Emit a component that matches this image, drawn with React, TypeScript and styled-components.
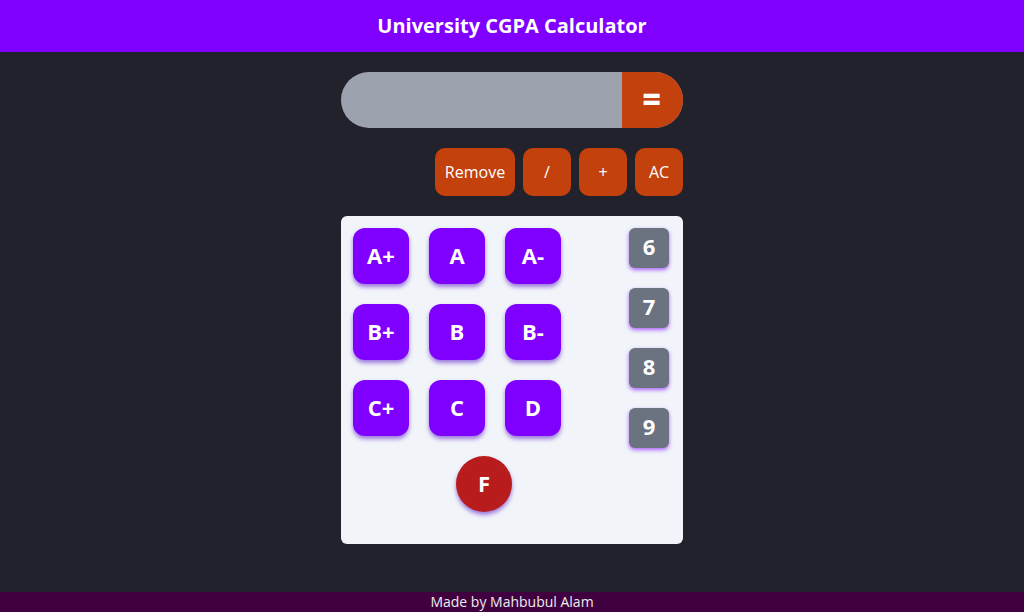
import React from "react";
import styled, { createGlobalStyle } from "styled-components";

const Global = createGlobalStyle`
  html, body { margin: 0; padding: 0; }
  body { background: #21222c; font-family: "Open Sans", "Noto Sans", sans-serif; }
  #root { min-height: 612px; }
`;

const Page = styled.div`
  height: 612px;
  display: flex;
  flex-direction: column;
  background: #21222c;
`;

const Header = styled.header`
  height: 52px;
  background: #8000ff;
  color: #fff;
  display: flex;
  align-items: center;
  justify-content: center;
  font-weight: 700;
  font-size: 20px;
  padding-bottom: 2px;
  box-sizing: border-box;
`;

const Main = styled.main`
  flex: 1;
  display: flex;
  flex-direction: column;
  align-items: center;
  padding-top: 20px;
`;

const Calc = styled.div`
  width: 342px;
  display: flex;
  flex-direction: column;
  gap: 20px;
`;

const Display = styled.div`
  height: 56px;
  border-radius: 28px;
  background: #9ca3af;
  display: flex;
  overflow: hidden;
`;

const Screen = styled.div`
  flex: 1;
`;

const Equals = styled.button`
  width: 61px;
  border: none;
  background: #c2410c;
  color: #fff;
  font-family: inherit;
  font-weight: 800;
  font-size: 32px;
  display: flex;
  align-items: center;
  justify-content: center;
  padding: 0 2px 4px 0;
`;

const Ops = styled.div`
  display: flex;
  justify-content: flex-end;
  gap: 8px;
`;

const OpButton = styled.button<{ $w?: number }>`
  width: ${(p) => p.$w ?? 48}px;
  height: 48px;
  border: none;
  border-radius: 10px;
  background: #c2410c;
  color: #fff;
  font-family: inherit;
  font-size: 16px;
  padding: 0;
`;

const Panel = styled.div`
  height: 328px;
  box-sizing: border-box;
  background: #f1f5f9;
  border-radius: 6px;
  padding: 12px 14px 12px 12px;
  display: flex;
  gap: 14px;
`;

const Left = styled.div`
  flex: 1;
  display: flex;
  flex-direction: column;
  gap: 20px;
`;

const Grades = styled.div`
  display: grid;
  grid-template-columns: repeat(3, 56px);
  grid-auto-rows: 56px;
  gap: 20px;
`;

const Grade = styled.button<{ $round?: boolean }>`
  width: 56px;
  height: 56px;
  border: none;
  border-radius: ${(p) => (p.$round ? "50%" : "12px")};
  background: ${(p) => (p.$round ? "#b91c1c" : "#8000ff")};
  color: #fff;
  font-family: inherit;
  font-weight: 700;
  font-size: 22px;
  padding: 0 0 3px;
  box-shadow: 0 3px 4px rgba(90, 20, 200, 0.55);
`;

const FRow = styled.div`
  display: flex;
  justify-content: center;
`;

const Numbers = styled.div`
  width: 40px;
  display: flex;
  flex-direction: column;
  gap: 20px;
`;

const Num = styled.button`
  width: 40px;
  height: 40px;
  border: none;
  border-radius: 6px;
  background: #6b7280;
  color: #fff;
  font-family: inherit;
  font-weight: 700;
  font-size: 22px;
  padding: 0 0 4px;
  box-shadow: 0 2px 4px rgba(128, 0, 255, 0.6);
`;

const Footer = styled.footer`
  height: 20px;
  background: #400040;
  color: #ececec;
  font-size: 14px;
  display: flex;
  align-items: center;
  justify-content: center;
  padding-bottom: 2px;
  box-sizing: border-box;
`;

const grades = ["A+", "A", "A-", "B+", "B", "B-", "C+", "C", "D"];
const nums = ["6", "7", "8", "9"];

export default function App() {
  return (
    <>
      <Global />
      <Page>
        <Header>University CGPA Calculator</Header>
        <Main>
          <Calc>
            <Display>
              <Screen />
              <Equals>=</Equals>
            </Display>
            <Ops>
              <OpButton $w={80}>Remove</OpButton>
              <OpButton>/</OpButton>
              <OpButton>+</OpButton>
              <OpButton>AC</OpButton>
            </Ops>
            <Panel>
              <Left>
                <Grades>
                  {grades.map((g) => (
                    <Grade key={g}>{g}</Grade>
                  ))}
                </Grades>
                <FRow>
                  <Grade $round>F</Grade>
                </FRow>
              </Left>
              <Numbers>
                {nums.map((n) => (
                  <Num key={n}>{n}</Num>
                ))}
              </Numbers>
            </Panel>
          </Calc>
        </Main>
        <Footer>Made by Mahbubul Alam</Footer>
      </Page>
    </>
  );
}
